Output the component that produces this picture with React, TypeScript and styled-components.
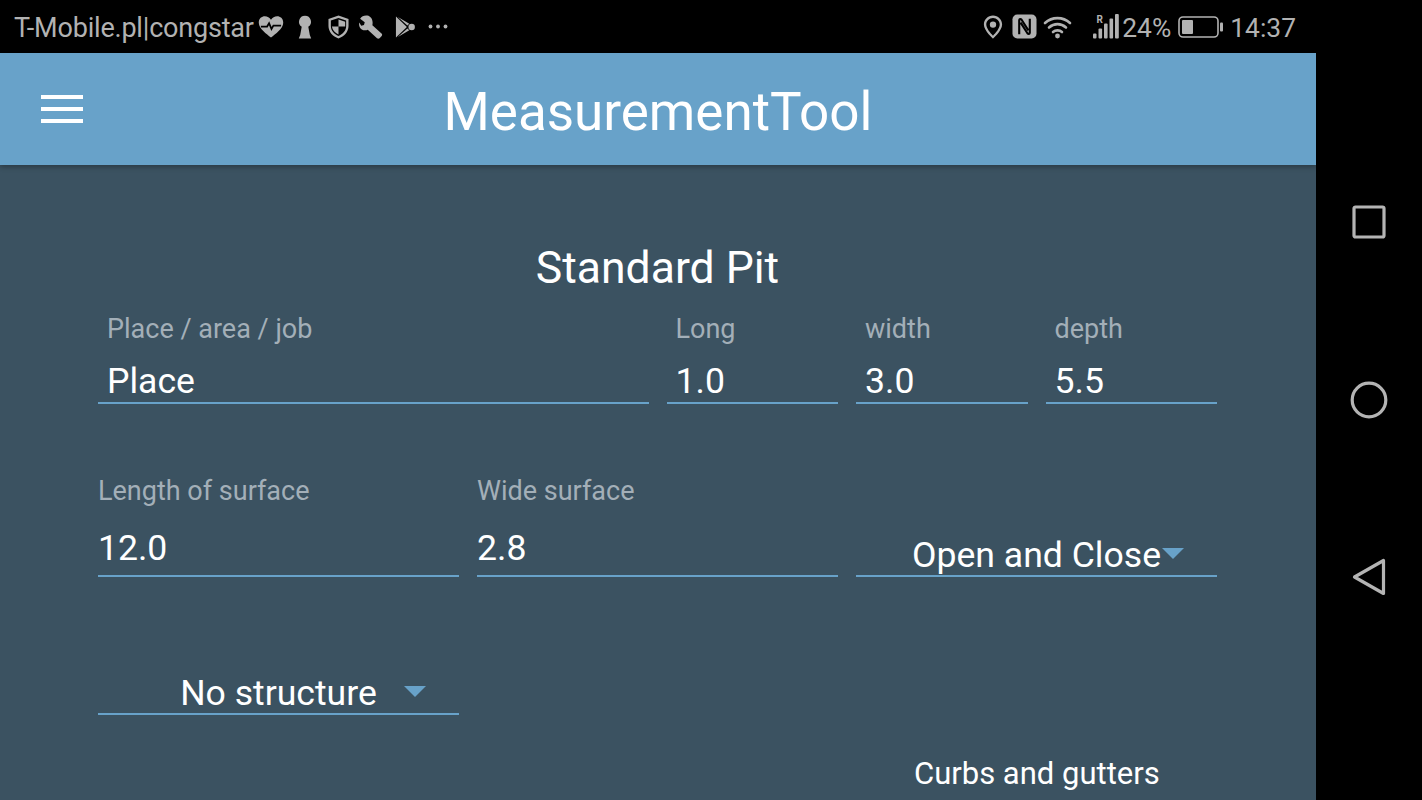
import React from "react";
import styled, { createGlobalStyle } from "styled-components";

const GlobalStyle = createGlobalStyle`
  html, body {
    margin: 0;
    padding: 0;
    background: #000;
    font-family: Roboto, "Liberation Sans", sans-serif;
    overflow: hidden;
  }
`

const Screen = styled.div`
  width: 1422px;
  height: 800px;
  display: flex;
  background: #000;
  overflow: hidden;
`
const Main = styled.div`
  width: 1316px;
  height: 800px;
  display: flex;
  flex-direction: column;
`
const StatusBar = styled.div`
  height: 53px;
  flex: none;
  display: flex;
  align-items: center;
  justify-content: space-between;
  background: #000;
  color: #b2b2b2;
  padding: 0 20px 0 14px;
  font-size: 26.4px;
  box-sizing: border-box;
`
const StatusGroup = styled.div`
  display: flex;
  align-items: center;
`
const StatusText = styled.span<{ $gap?: number }>`
  padding-top: 2px;
  margin-right: ${(p) => p.$gap ?? 0}px;
`
const Carrier = styled(StatusText)`
  font-size: 27px;
  letter-spacing: -0.2px;
`
const StatusIcon = styled.svg<{ $gap?: number }>`
  display: block;
  flex: none;
  margin-right: ${(p) => p.$gap ?? 0}px;
  fill: #b2b2b2;
`
const AppBar = styled.div`
  height: 112px;
  flex: none;
  position: relative;
  z-index: 1;
  display: flex;
  align-items: center;
  background: #68a2c9;
  box-shadow: 0 2px 5px rgba(0, 0, 0, 0.3);
`
const MenuButton = styled.div`
  width: 42px;
  margin-left: 41px;
  display: flex;
  flex-direction: column;
  gap: 8px;
`
const MenuLine = styled.div`
  height: 4px;
  background: #fff;
`
const AppTitle = styled.div`
  flex: 1;
  margin-right: 83px;
  padding-top: 5px;
  text-align: center;
  color: #fff;
  font-size: 53px;
  line-height: 60px;
`
const Content = styled.div`
  flex: 1;
  background: #3b5261;
  padding: 0 99px 0 98px;
  display: flex;
  flex-direction: column;
  overflow: hidden;
`
const PageTitle = styled.div`
  margin-top: 76px;
  height: 54px;
  text-align: center;
  color: #fff;
  font-size: 44.5px;
  line-height: 54px;
`
const Row = styled.div<{ $top: number }>`
  display: grid;
  grid-template-columns: repeat(12, 1fr);
  column-gap: 18px;
  margin-top: ${(p) => p.$top}px;
`
const Field = styled.div<{ $span: number; $inset?: number }>`
  grid-column: span ${(p) => p.$span};
  display: flex;
  flex-direction: column;
  justify-content: flex-end;
  --inset: ${(p) => p.$inset ?? 0}px;
`
const Label = styled.div`
  color: #a3afb8;
  font-size: 27px;
  line-height: 32px;
  padding-left: var(--inset);
`
const Value = styled.div<{ $top: number; $height: number }>`
  margin-top: ${(p) => p.$top}px;
  height: ${(p) => p.$height}px;
  line-height: ${(p) => p.$height + 2}px;
  color: #fff;
  font-size: 35.6px;
  padding-left: var(--inset);
  border-bottom: 2px solid #68a2c9;
`
const Select = styled.div`
  height: 40px;
  display: flex;
  align-items: center;
  justify-content: center;
  color: #fff;
  font-size: 35.6px;
  line-height: 40px;
  border-bottom: 2px solid #68a2c9;
`
const SelectText = styled.span`
  position: relative;
`
const Caret = styled.span<{ $gap: number }>`
  position: absolute;
  left: 100%;
  top: 13px;
  margin-left: ${(p) => p.$gap}px;
  width: 0;
  height: 0;
  border-left: 11.5px solid transparent;
  border-right: 11.5px solid transparent;
  border-top: 11px solid #68a2c9;
`
const SelectRow = styled.div`
  display: flex;
  margin-top: 96px;
`
const SelectSlot = styled.div`
  width: 361px;
`
const Section = styled.div`
  margin-top: 41px;
  padding-left: 816px;
  color: #fff;
  font-size: 31px;
  line-height: 36px;
`
const NavBar = styled.div`
  flex: 1;
  display: flex;
  flex-direction: column;
  align-items: center;
  background: #000;
  padding-top: 205px;
`
const NavIcon = styled.svg<{ $top?: number }>`
  display: block;
  margin-top: ${(p) => p.$top ?? 0}px;
  fill: none;
  stroke: #b4b4b4;
  stroke-width: 3.2;
  stroke-linejoin: round;
`

export default function App(): React.JSX.Element {
  return (
    <Screen>
      <GlobalStyle />
      <Main>
        <StatusBar>
          <StatusGroup>
            <Carrier $gap={4}>T-Mobile.pl|congstar</Carrier>
            {/* heart with pulse */}
            <StatusIcon width="26" height="24" viewBox="0 0 27 24" $gap={13}>
              <path d="M13.5 23 C9 19 1 14 .8 7.5 C.8 3 4 .8 7 .8 C9.8.8 12 2.2 13.5 4.5 C15 2.2 17.2.8 20 .8 C23 .8 26.2 3 26.2 7.5 C26 14 18 19 13.5 23Z" />
              <path d="M3 11.5h6.5l2-3.500 2.500 6 2-3.500h8" fill="none" stroke="#000" strokeWidth="1.8" />
            </StatusIcon>
            {/* keyhole */}
            <StatusIcon width="16" height="24" viewBox="0 0 16 24" $gap={15}>
              <path d="M8 .8a6 6 0 0 1 3.300 11L12.800 20l1.400 3.500H1.800L3.200 20l1.500-8.200A6 6 0 0 1 8 .8Z" />
            </StatusIcon>
            {/* shield */}
            <StatusIcon width="21" height="24" viewBox="0 0 22 25" $gap={10}>
              <path fillRule="evenodd" d="M11 .5 21.500 4v7.500C21.500 17.500 17 22.500 11 24.500 5 22.500.5 17.500.5 11.500V4ZM11 3 3 5.700v5.800c0 4.800 3.500 8.700 8 10.400 4.500-1.700 8-5.600 8-10.400V5.700Z" />
              <path d="M11 4.700 18 7v5h-7ZM11 12H4.100c.5 3.700 3.200 6.800 6.900 8.400Z" />
            </StatusIcon>
            {/* wrench */}
            <StatusIcon width="24" height="24" viewBox="0 0 26 26" $gap={12}>
              <path d="M9 .6 C5.500.2 3 1.500 1.200 4l5 3.800-.8 3-3 .8L.3 8C-.5 11 .6 14 3 15.600 5 16.800 7.500 16.800 9.500 16L19.500 25.200c.8.700 2 .7 2.800 0l2.300-2.500c.7-.8.6-2-.2-2.700L14.500 11C15.500 6 13.500 1.500 9 .6Z" />
            </StatusIcon>
            {/* play store */}
            <StatusIcon width="20" height="24" viewBox="0 0 21 24" $gap={13}>
              <path d="M1 1 12.500 12 1 23Z" />
              <path d="M3 1.500 15 8.500 13 10.500ZM3 22.500 15 15.500 13 13.500Z" />
              <circle cx="17.500" cy="12" r="3.400" />
            </StatusIcon>
            {/* more dots */}
            <StatusIcon width="20" height="5" viewBox="0 0 20 5">
              <circle cx="2.500" cy="2.500" r="1.900" />
              <circle cx="10" cy="2.500" r="1.900" />
              <circle cx="17.500" cy="2.500" r="1.900" />
            </StatusIcon>
          </StatusGroup>
          <StatusGroup>
            {/* location pin */}
            <StatusIcon width="20" height="24" viewBox="0 0 20 25" $gap={9}>
              <path fillRule="evenodd" d="M10 .5C4.700.5.500 4.700.500 10c0 6.500 9.500 14.700 9.500 14.700S19.500 16.500 19.500 10C19.500 4.700 15.300.5 10 .5Zm0 2.500c3.900 0 7 3.100 7 7 0 3.900-4.500 9.300-7 11.500C7.500 19.300 3 13.900 3 10c0-3.900 3.100-7 7-7Zm0 3.700a3.300 3.300 0 1 0 0 6.600 3.300 3.300 0 0 0 0-6.600Z" />
            </StatusIcon>
            {/* NFC */}
            <StatusIcon width="25" height="25" viewBox="0 0 26 26" $gap={6}>
              <rect x=".5" y=".5" width="25" height="25" rx="5" />
              <path d="M7.500 21V6.500C7.500 5 9 4.800 10 6L17 17M18.500 5V19.500C18.500 21 17 21.200 16 20L9 9" fill="none" stroke="#000" strokeWidth="2.200" />
            </StatusIcon>
            {/* wifi */}
            <StatusIcon width="29" height="24" viewBox="0 0 28 24" $gap={21}>
              <path d="M1.500 8C8.500 1.500 19.500 1.500 26.500 8M5.500 12.500C10.500 8 17.500 8 22.500 12.500M9.500 17C12 14.800 16 14.800 18.500 17" fill="none" stroke="#b2b2b2" strokeWidth="2.600" strokeLinecap="round" />
              <circle cx="14" cy="21" r="2.400" />
            </StatusIcon>
            {/* signal bars */}
            <StatusIcon width="26" height="25" viewBox="0 0 26 25" $gap={3}>
              <rect x="0" y="19.500" width="3.500" height="5" rx="1" />
              <rect x="5.500" y="14.500" width="3.600" height="10" rx="1" />
              <rect x="11" y="9.500" width="3.600" height="15" rx="1" />
              <rect x="16.500" y="4.500" width="3.600" height="20" rx="1" />
              <rect x="22" y="0" width="3.800" height="24.500" rx="1" />
              <text x="3.500" y="8.500" fontSize="10" fontWeight="700" fontFamily="Roboto, sans-serif">R</text>
            </StatusIcon>
            <StatusText $gap={7}>24%</StatusText>
            {/* battery */}
            <StatusIcon width="45" height="22" viewBox="0 0 45 22" $gap={7}>
              <rect x="1" y="1" width="39" height="20" rx="4" fill="none" stroke="#b2b2b2" strokeWidth="1.600" />
              <rect x="4" y="4" width="11" height="14" rx="1" />
              <rect x="42" y="6.500" width="3" height="9" rx="1" />
            </StatusIcon>
            <StatusText>14:37</StatusText>
          </StatusGroup>
        </StatusBar>
        <AppBar>
          <MenuButton>
            <MenuLine />
            <MenuLine />
            <MenuLine />
          </MenuButton>
          <AppTitle>MeasurementTool</AppTitle>
        </AppBar>
        <Content>
          <PageTitle>Standard Pit</PageTitle>
          <Row $top={18}>
            <Field $span={6} $inset={9}>
              <Label>Place / area / job</Label>
              <Value $top={14} $height={43}>Place</Value>
            </Field>
            <Field $span={2} $inset={9}>
              <Label>Long</Label>
              <Value $top={14} $height={43}>1.0</Value>
            </Field>
            <Field $span={2} $inset={9}>
              <Label>width</Label>
              <Value $top={14} $height={43}>3.0</Value>
            </Field>
            <Field $span={2} $inset={9}>
              <Label>depth</Label>
              <Value $top={14} $height={43}>5.5</Value>
            </Field>
          </Row>
          <Row $top={71}>
            <Field $span={4}>
              <Label>Length of surface</Label>
              <Value $top={12} $height={56}>12.0</Value>
            </Field>
            <Field $span={4}>
              <Label>Wide surface</Label>
              <Value $top={12} $height={56}>2.8</Value>
            </Field>
            <Field $span={4}>
              <Select>
                <SelectText>
                  Open and Close
                  <Caret $gap={1} />
                </SelectText>
              </Select>
            </Field>
          </Row>
          <SelectRow>
            <SelectSlot>
              <Select>
                <SelectText>
                  No structure
                  <Caret $gap={27} />
                </SelectText>
              </Select>
            </SelectSlot>
          </SelectRow>
          <Section>Curbs and gutters</Section>
        </Content>
      </Main>
      <NavBar>
        <NavIcon width="34" height="34" viewBox="0 0 34 34">
          <rect x="2" y="2" width="30" height="30" rx="1.500" />
        </NavIcon>
        <NavIcon width="38" height="38" viewBox="0 0 38 38" $top={142}>
          <circle cx="19" cy="19" r="16.800" />
        </NavIcon>
        <NavIcon width="34" height="38" viewBox="0 0 34 38" $top={139}>
          <path d="M31.500 2.500V35.500L2.500 19Z" />
        </NavIcon>
      </NavBar>
    </Screen>
  );
}
